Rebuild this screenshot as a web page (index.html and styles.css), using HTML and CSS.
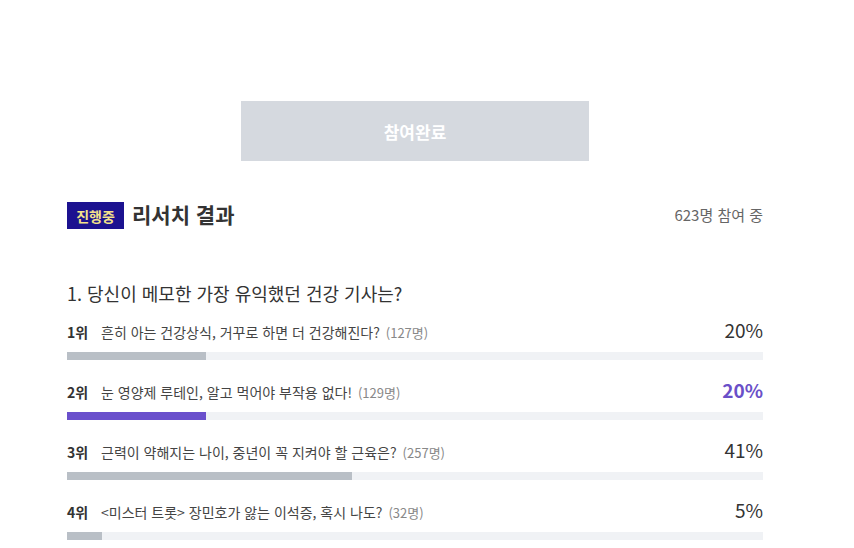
FILE: index.html
```html
<!DOCTYPE html>
<html lang="ko">
<head>
<meta charset="utf-8">
<link rel="stylesheet" href="styles.css">
</head>
<body>
<div class="wrap">
  <div class="btn-row"><button class="done-btn">참여완료</button></div>
  <div class="head">
    <div class="head-left"><span class="badge">진행중</span><h2 class="title">리서치 결과</h2></div>
    <span class="count">623명 참여 중</span>
  </div>
  <h3 class="question">1. 당신이 메모한 가장 유익했던 건강 기사는?</h3>
  <ul class="items">
    <li class="item">
      <div class="row"><span class="rank">1위</span><span class="label">흔히 아는 건강상식, 거꾸로 하면 더 건강해진다?</span><span class="num">(127명)</span><span class="pct">20%</span></div>
      <div class="track"><div class="fill" style="width:20%"></div></div>
    </li>
    <li class="item top">
      <div class="row"><span class="rank">2위</span><span class="label">눈 영양제 루테인, 알고 먹어야 부작용 없다!</span><span class="num">(129명)</span><span class="pct">20%</span></div>
      <div class="track"><div class="fill" style="width:20%"></div></div>
    </li>
    <li class="item">
      <div class="row"><span class="rank">3위</span><span class="label">근력이 약해지는 나이, 중년이 꼭 지켜야 할 근육은?</span><span class="num">(257명)</span><span class="pct">41%</span></div>
      <div class="track"><div class="fill" style="width:41%"></div></div>
    </li>
    <li class="item">
      <div class="row"><span class="rank">4위</span><span class="label">&lt;미스터 트롯&gt; 장민호가 앓는 이석증, 혹시 나도?</span><span class="num">(32명)</span><span class="pct">5%</span></div>
      <div class="track"><div class="fill" style="width:5%"></div></div>
    </li>
  </ul>
</div>
</body>
</html>
```
FILE: styles.css
```css
* { box-sizing: border-box; }
body {
  margin: 0;
  background: #fff;
  font-family: "Noto Sans CJK KR", "Noto Sans", sans-serif;
  color: #333;
}
.wrap {
  width: 696px;
  margin-left: 67px;
  padding-top: 101px;
}
.btn-row { display: flex; justify-content: center; }
.done-btn {
  width: 348px;
  height: 60px;
  border: 0;
  background: #d5d9df;
  color: #fff;
  font-family: inherit;
  font-size: 17px;
  font-weight: 700;
  padding: 0;
}
.head {
  margin-top: 41px;
  display: flex;
  align-items: center;
  justify-content: space-between;
  height: 27px;
}
.head-left { display: flex; align-items: center; gap: 8px; }
.badge {
  display: inline-flex;
  align-items: center;
  justify-content: center;
  width: 57px;
  height: 27px;
  background: #1c1290;
  color: #f4e38a;
  font-size: 14px;
  font-weight: 700;
  line-height: 1;
}
.title {
  margin: -2px 0 0;
  font-size: 21px;
  font-weight: 700;
  color: #333;
  line-height: 1;
}
.count { font-size: 15px; color: #666; line-height: 1; margin-top: -3px; }
.question {
  margin: 52px 0 0;
  font-size: 18px;
  font-weight: 400;
  color: #333;
  line-height: 24px;
}
.items { list-style: none; margin: 12px 0 0; padding: 0; }
.item { height: 60px; }
.row {
  display: flex;
  align-items: baseline;
  height: 26px;
  line-height: 26px;
}
.rank { font-size: 14px; font-weight: 700; color: #333; width: 34px; }
.label { font-size: 14px; color: #444; }
.num { font-size: 13px; color: #888; margin-left: 6px; }
.pct { margin-left: auto; font-size: 19px; color: #333; }
.top .pct { color: #6a4fc8; font-weight: 700; }
.track {
  margin-top: 9px;
  height: 8px;
  background: #f0f2f5;
}
.fill { height: 100%; background: #b9bfc6; }
.top .fill { background: #6a50cc; }
```
